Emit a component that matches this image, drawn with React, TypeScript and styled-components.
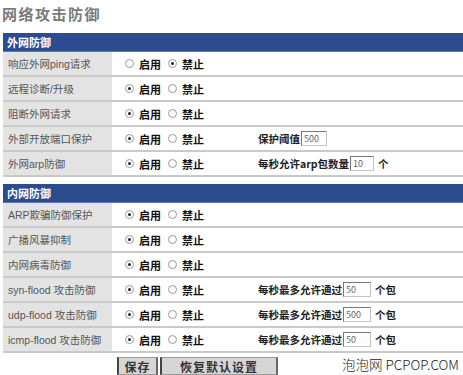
import React from 'react'
import styled, { createGlobalStyle } from 'styled-components'

const Global = createGlobalStyle`
  body {
    margin: 0;
    background: #fff;
    font-family: "Liberation Sans", "Noto Sans CJK SC", sans-serif;
  }
`

const Page = styled.div`
  width: 463px;
  height: 375px;
  overflow: hidden;
  position: relative;
`

const Title = styled.h1`
  margin: 0;
  height: 33px;
  padding: 3px 0 0 2px;
  box-sizing: border-box;
  font-size: 15px;
  font-weight: 700;
  letter-spacing: 1.5px;
  color: #7a7a7a;
  font-family: "Noto Sans CJK SC", sans-serif;
`

const Section = styled.section<{ gap?: number }>`
  margin: ${({ gap }) => gap || 0}px 0 0 3px;
  width: 460px;
`

const Header = styled.div`
  height: 18px;
  background: #2d4c8f;
  color: #fff;
  font-size: 11px;
  font-weight: 700;
  line-height: 18px;
  padding-left: 4px;
  font-family: "Noto Sans CJK SC", sans-serif;
  border-bottom: 1px solid #5a78b5;
`

const Row = styled.div`
  display: flex;
  height: 23px;
  border-bottom: 2px solid #c9c9c9;
`

const Label = styled.div`
  width: 109px;
  margin-right: 3px;
  background: #e3e3e3;
  color: #555;
  font-size: 10.5px;
  padding: 4px 0 0 5px;
  box-sizing: border-box;
  white-space: nowrap;
  font-family: "Liberation Sans", "Noto Sans CJK SC", sans-serif;
`

const Value = styled.div`
  flex: 1;
  display: flex;
  align-items: center;
  padding-left: 10px;
`

const Options = styled.div`
  width: 133px;
  display: flex;
  align-items: center;
`

const Radio = styled.span<{ on?: boolean }>`
  width: 7px;
  height: 7px;
  border-radius: 50%;
  border: 1px solid #9a9a9a;
  margin-right: 5px;
  position: relative;
  flex-shrink: 0;
  &::after {
    content: '';
    display: ${({ on }) => (on ? 'block' : 'none')};
    position: absolute;
    left: 2px;
    top: 2px;
    width: 3px;
    height: 3px;
    border-radius: 50%;
    background: #222;
  }
`

const OptText = styled.span`
  font-size: 11px;
  font-weight: 700;
  color: #111;
  margin-right: 7px;
  font-family: "Noto Sans CJK SC", sans-serif;
`

const Extra = styled.div`
  display: flex;
  align-items: center;
  font-size: 10.5px;
  font-weight: 700;
  color: #222;
  font-family: "Noto Sans CJK SC", sans-serif;
`

const Field = styled.span<{ w: number }>`
  width: ${({ w }) => w}px;
  height: 13px;
  margin: 0 4px 0 1px;
  border: 1px solid #c4c4c4;
  border-left-color: #777;
  border-top-color: #777;
  font-size: 9px;
  font-weight: 400;
  line-height: 13px;
  padding-left: 2px;
  color: #666;
  box-sizing: content-box;
`

const Footer = styled.div`
  display: flex;
  align-items: flex-end;
  height: 22px;
  padding-left: 117px;
`

const Button = styled.button<{ w: number }>`
  width: ${({ w }) => w}px;
  height: 18px;
  margin-right: 2px;
  padding: 0;
  background: #d6d6d6;
  border: 1px solid #999;
  border-left: 2px solid #444;
  border-right: 2px solid #666;
  font-size: 12px;
  line-height: 15px;
  font-weight: 700;
  color: #333;
  letter-spacing: 1px;
  font-family: "Noto Sans CJK SC", serif;
`

const Mark = styled.div`
  position: absolute;
  right: 4px;
  bottom: 3px;
  font-size: 13.5px;
  line-height: 16px;
  color: #1a1a1a;
  font-family: "Noto Sans CJK SC", sans-serif;
  font-weight: 300;
`

type Item = { label: string; on: boolean; extra?: React.ReactNode }

const outer: Item[] = [
  { label: '响应外网ping请求', on: false },
  { label: '远程诊断/升级', on: true },
  { label: '阻断外网请求', on: true },
  {
    label: '外部开放端口保护',
    on: true,
    extra: (
      <>
        保护阈值 <Field w={22}>500</Field>
      </>
    ),
  },
  {
    label: '外网arp防御',
    on: true,
    extra: (
      <>
        每秒允许arp包数量<Field w={20}>10</Field> 个
      </>
    ),
  },
]

const pkt = (n: string) => (
  <>
    每秒最多允许通过 <Field w={24}>{n}</Field>个包
  </>
)

const inner: Item[] = [
  { label: 'ARP欺骗防御保护', on: true },
  { label: '广播风暴抑制', on: true },
  { label: '内网病毒防御', on: true },
  { label: 'syn-flood 攻击防御', on: true, extra: pkt('50') },
  { label: 'udp-flood 攻击防御', on: true, extra: pkt('500') },
  { label: 'icmp-flood 攻击防御', on: true, extra: pkt('50') },
]

const Rows: React.FC<{ items: Item[] }> = ({ items }) => (
  <>
    {items.map((it) => (
      <Row key={it.label}>
        <Label>{it.label}</Label>
        <Value>
          <Options>
            <Radio on={it.on} />
            <OptText>启用</OptText>
            <Radio on={!it.on} />
            <OptText>禁止</OptText>
          </Options>
          {it.extra && <Extra>{it.extra}</Extra>}
        </Value>
      </Row>
    ))}
  </>
)

const App: React.FC = () => {
  return (
    <Page>
      <Global />
      <Title>网络攻击防御</Title>
      <Section>
        <Header>外网防御</Header>
        <Rows items={outer} />
      </Section>
      <Section gap={7}>
        <Header>内网防御</Header>
        <Rows items={inner} />
      </Section>
      <Footer>
        <Button w={41}>保存</Button>
        <Button w={118}>恢复默认设置</Button>
      </Footer>
      <Mark>泡泡网 PCPOP.COM</Mark>
    </Page>
  )
}

export default App
